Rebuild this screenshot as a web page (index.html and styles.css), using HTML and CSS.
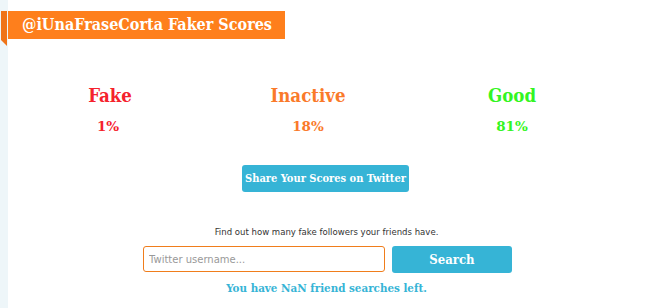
FILE: index.html
```html
<!DOCTYPE html>
<html>
<head>
  <title>Faker Scores</title>
  <link rel="stylesheet" href="styles.css">
</head>
<body>

  <div class="page">
    <h1 class="banner">@iUnaFraseCorta Faker Scores</h1>

    <div class="scores">
      <div class="score fake">
        <div class="label">Fake</div>
        <div class="pct">1%</div>
      </div>
      <div class="score inactive">
        <div class="label">Inactive</div>
        <div class="pct">18%</div>
      </div>
      <div class="score good">
        <div class="label">Good</div>
        <div class="pct">81%</div>
      </div>
    </div>

    <div class="share">
      <button class="btn share-btn">Share Your Scores on Twitter</button>
    </div>

    <div class="friends">
      <p class="hint">Find out how many fake followers your friends have.</p>
      <div class="search-row">
        <input type="text" class="username" placeholder="Twitter username...">
        <button class="btn search-btn">Search</button>
      </div>
      <p class="left">You have NaN friend searches left.</p>
    </div>
  </div>

</body>
</html>
```

FILE: styles.css
```css
body {
  margin: 0;
  background-color: #eef6f9;
  font-family: "DejaVu Serif", serif;
}

.page {
  margin-left: 8px;
  background-color: #fff;
  min-height: 100vh;
  padding-top: 11px;
}

.banner {
  position: relative;
  display: inline-block;
  margin: 0;
  height: 28px;
  line-height: 28px;
  padding: 0 13px 0 14px;
  background-color: #fe7f1c;
  color: #fff;
  font-size: 16px;
  font-weight: bold;
  font-stretch: condensed;
}

/* folded corner hanging off the left edge */
.banner::before {
  content: "";
  position: absolute;
  left: -7px;
  top: 0;
  width: 6px;
  height: 29px;
  background-color: #ef7419;
}

.banner::after {
  content: "";
  position: absolute;
  left: -7px;
  top: 29px;
  border-top: 6px solid #ef7419;
  border-left: 6px solid transparent;
}

.scores {
  display: flex;
  margin-top: 44px;
}

.score {
  width: 120px;
  text-align: center;
}

.label {
  font-size: 18.5px;
  font-weight: bold;
  line-height: 26px;
  font-stretch: condensed;
}

.pct {
  margin-top: 8px;
  font-size: 13.5px;
  font-weight: bold;
  line-height: 18px;
}

.fake {
  margin-left: 42px;
  color: #f5222d;
}

.fake .pct { padding-right: 4px; }

.inactive {
  margin-left: 78px;
  color: #fa7a2a;
}

.good {
  margin-left: 84px;
  color: #33f522;
}

.share {
  text-align: center;
  margin-top: 30px;
  padding-right: 2px;
}

.btn {
  border: none;
  border-radius: 3px;
  background-color: #36b4d6;
  color: #fff;
  font-family: "DejaVu Serif", serif;
  font-weight: bold;
  font-stretch: condensed;
  cursor: pointer;
}

.share-btn {
  width: 167px;
  height: 27px;
  padding: 0;
  font-size: 11px;
}

.friends {
  margin-top: 34px;
  text-align: center;
}

.hint {
  margin: 0;
  font-family: "DejaVu Sans", sans-serif;
  font-stretch: condensed;
  font-size: 9.5px;
  color: #333;
}

.search-row {
  display: flex;
  justify-content: center;
  gap: 7px;
  margin-top: 9px;
  padding-left: 2px;
}

.username {
  box-sizing: border-box;
  width: 242px;
  height: 26px;
  border: 1px solid #f07d1c;
  border-radius: 3px;
  padding: 0 5px;
  font-family: "DejaVu Sans", sans-serif;
  font-size: 10px;
  outline: none;
}

.username::placeholder {
  color: #999;
}

.search-btn {
  width: 120px;
  height: 27px;
  font-size: 13px;
}

.left {
  margin: 8px 0 0;
  font-size: 11.5px;
  font-weight: bold;
  font-stretch: condensed;
  color: #36b4d6;
}
```
